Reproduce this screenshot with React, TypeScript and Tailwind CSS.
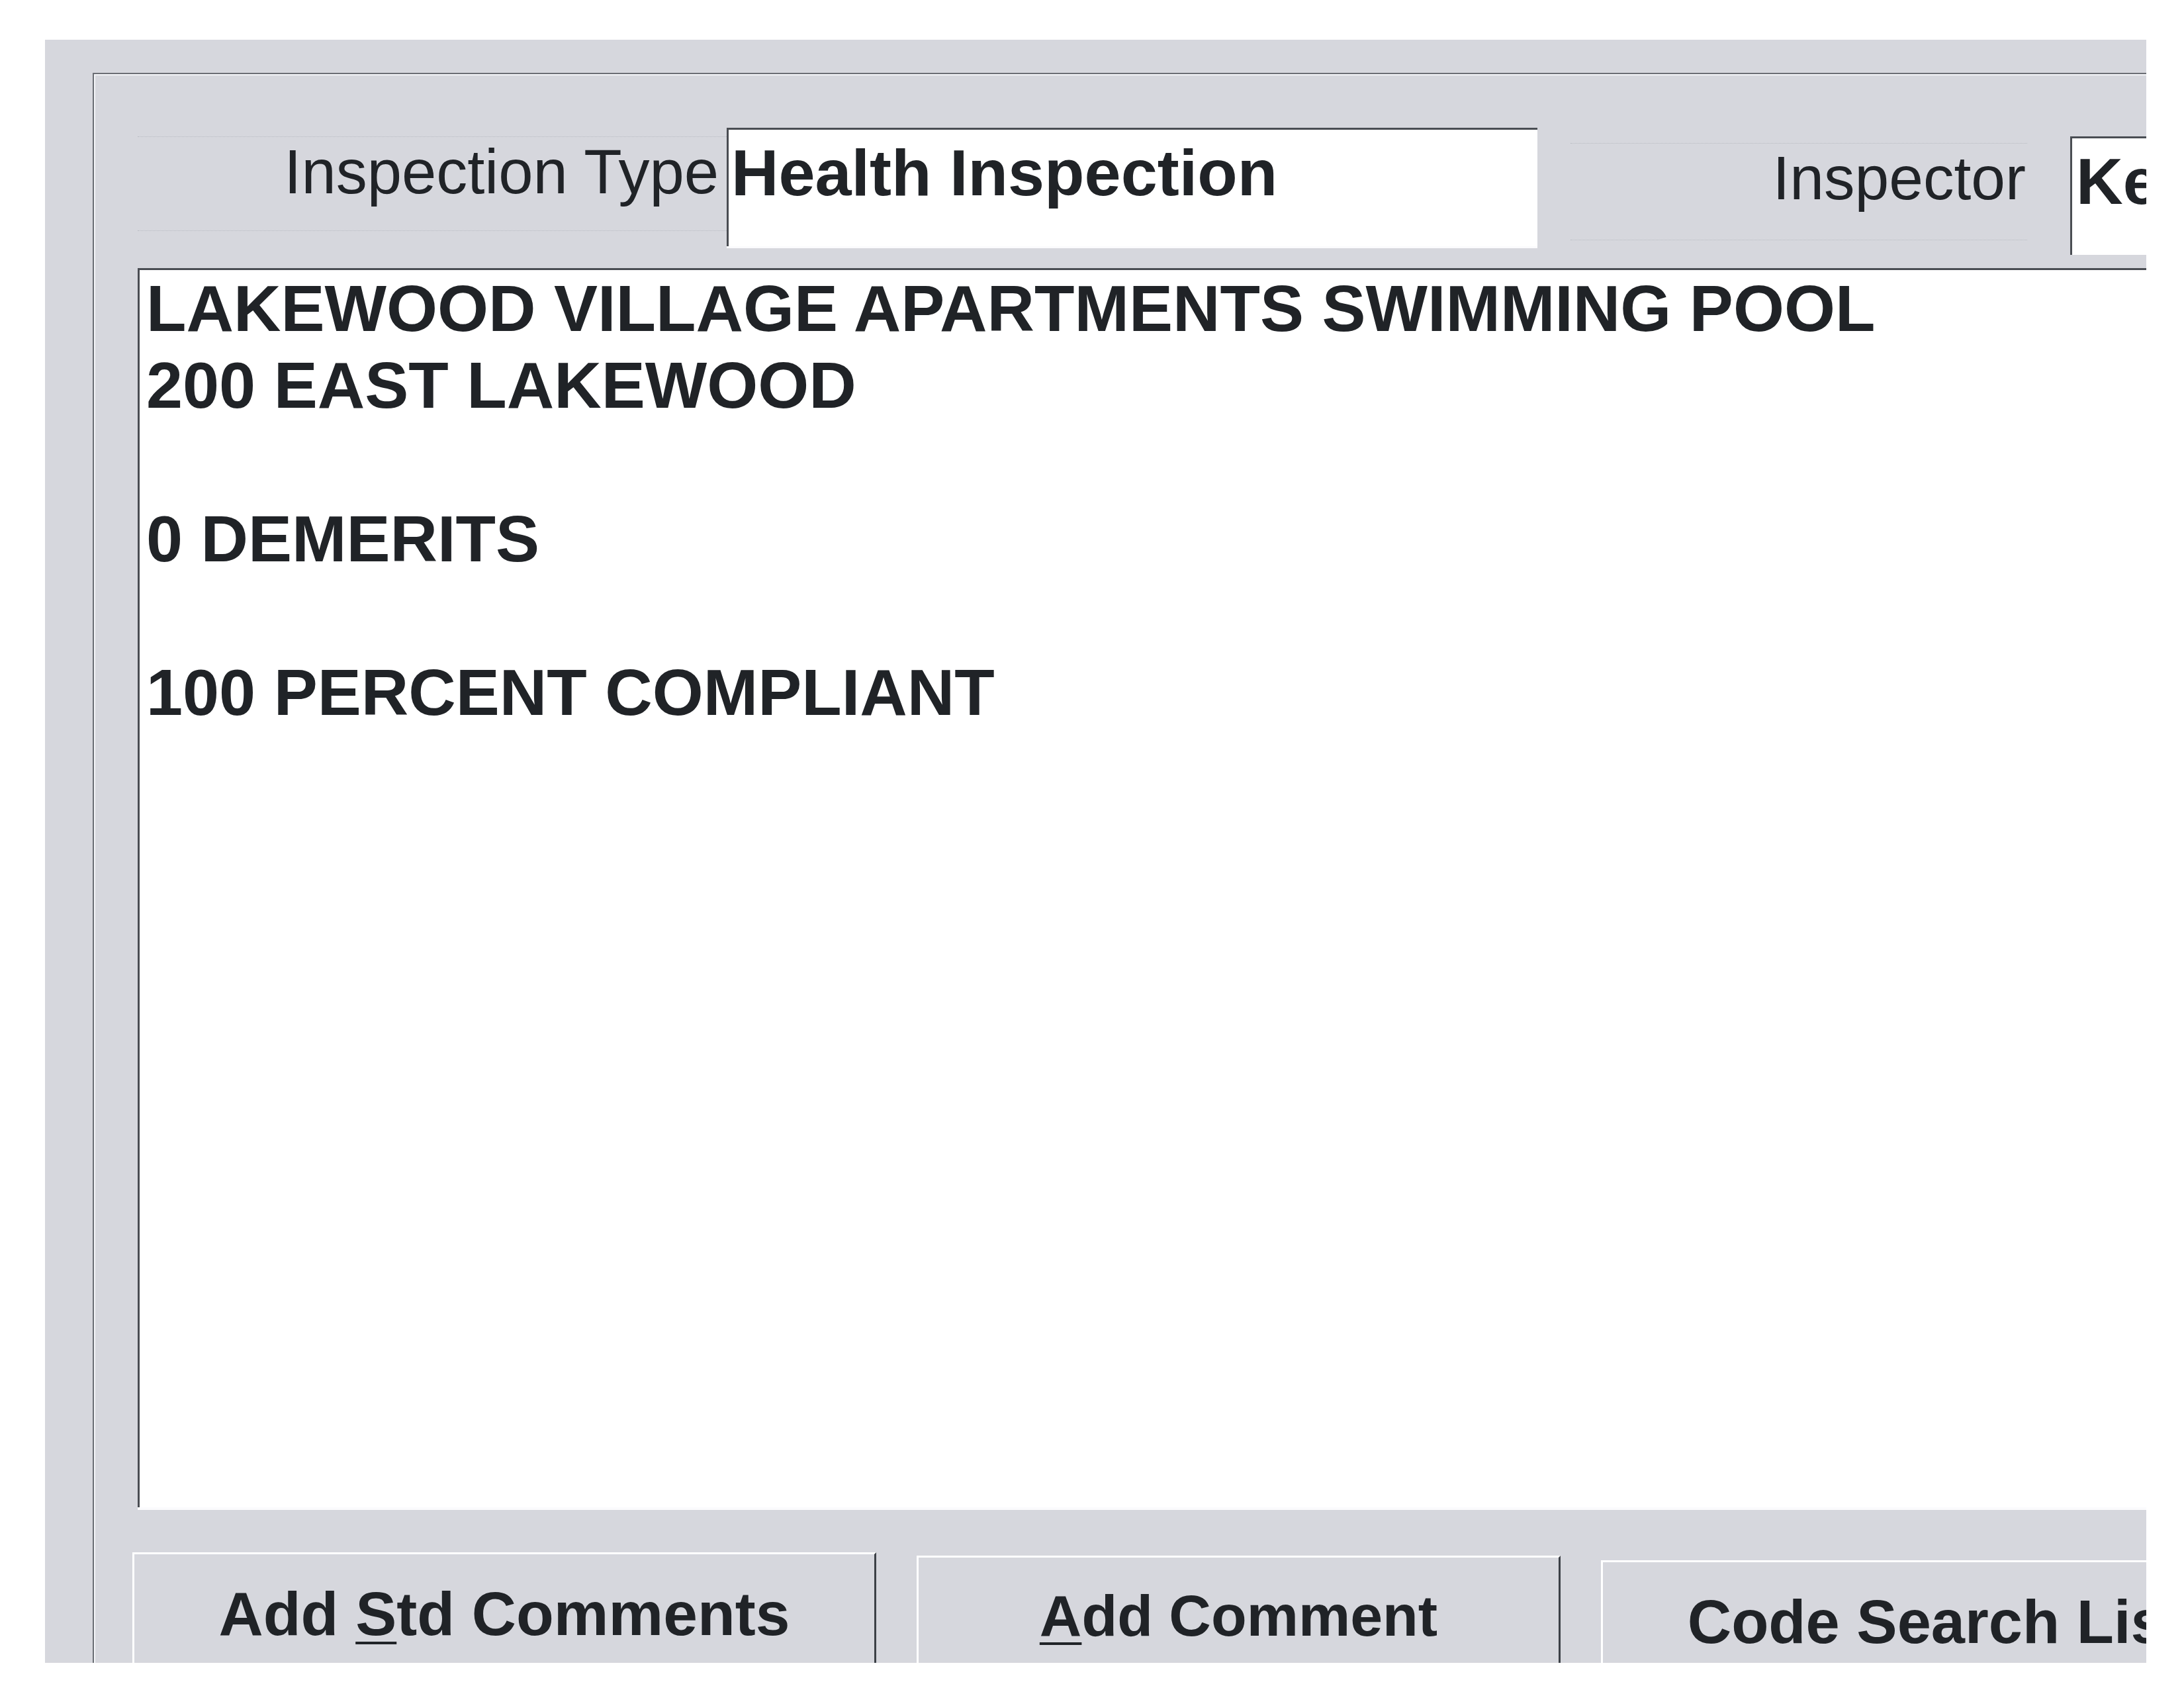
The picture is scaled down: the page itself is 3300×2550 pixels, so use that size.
import React from 'react';

const LINES = [
  'LAKEWOOD VILLAGE APARTMENTS SWIMMING POOL',
  '200 EAST LAKEWOOD',
  '',
  '0 DEMERITS',
  '',
  '100 PERCENT COMPLIANT',
];

export default function App() {
  return (
    <div
      className="w-[3300px] h-[2550px] bg-white pt-[60px] pl-[68px] text-[#202327]"
      style={{ fontFamily: '"Liberation Sans", Arial, sans-serif' }}
    >
      {/* Window surface, cropped at right and bottom */}
      <div className="w-[3175px] h-[2452px] bg-[#d6d7dd] overflow-hidden pl-[72px] pt-[50px]">
        {/* Etched frame */}
        <div className="w-[3200px] h-[2500px] border-l-2 border-t-2 border-[#6b6e74] shadow-[inset_2px_2px_0_#f4f5f8] pl-[66px]">
          {/* Header row */}
          <div className="flex items-start h-[293px]">
            <div className="shrink-0 mt-[94px] w-[890px] h-[143px] border-y border-dotted border-[#b9bbc2] flex justify-end pt-[6px] pr-[12px]">
              <span className="text-[94px] leading-none">Inspection Type</span>
            </div>
            <div className="shrink-0 mt-[81px] w-[1225px] h-[179px] bg-white border-t-[3px] border-l-[3px] border-[#4a4d53] shadow-[0_3px_0_#fbfbfd] pt-[15px] pl-[4px]">
              <span className="text-[99px] font-bold leading-none">Health Inspection</span>
            </div>
            <div className="shrink-0 ml-[50px] mt-[104px] w-[690px] h-[147px] border-y border-dotted border-[#b9bbc2] flex justify-end pt-[6px] pr-[2px]">
              <span className="text-[93px] leading-none">Inspector</span>
            </div>
            <div className="shrink-0 ml-[65px] mt-[94px] w-[400px] h-[179px] bg-white border-t-[3px] border-l-[3px] border-[#4a4d53] pt-[16px] pl-[6px]">
              <span className="text-[98px] font-bold leading-none">Ke</span>
            </div>
          </div>

          {/* Comment text area */}
          <div className="w-[3100px] h-[1872px] bg-white border-t-[3px] border-l-[3px] border-[#4a4d53] shadow-[0_4px_0_#fbfbfd] pl-[10px]">
            {LINES.map((line, i) => (
              <div key={i} className="h-[116px] text-[99px] font-bold leading-[116px] whitespace-pre">
                {line}
              </div>
            ))}
          </div>

          {/* Buttons */}
          <div className="flex items-start gap-[61px] mt-[68px] -ml-[8px]">
            <button className="shrink-0 w-[1124px] h-[220px] border-t-[3px] border-l-[3px] border-white border-r-[3px] border-r-[#3c4046] flex justify-center pt-[44px] cursor-pointer">
              <span className="text-[93px] font-bold leading-none whitespace-nowrap">
                Add <u className="underline decoration-[4px] underline-offset-[10px]">S</u>td Comments
              </span>
            </button>
            <button className="shrink-0 mt-[5px] w-[973px] h-[220px] border-t-[3px] border-l-[3px] border-white border-r-[3px] border-r-[#3c4046] flex justify-center pt-[44px] cursor-pointer">
              <span className="text-[88px] font-bold leading-none whitespace-nowrap">
                <u className="underline decoration-[4px] underline-offset-[10px]">A</u>dd Comment
              </span>
            </button>
            <button className="shrink-0 mt-[12px] w-[1013px] h-[220px] border-t-[3px] border-l-[3px] border-white border-r-[3px] border-r-[#3c4046] flex justify-center pt-[44px] cursor-pointer">
              <span className="text-[92px] font-bold leading-none whitespace-nowrap">Code Search List</span>
            </button>
          </div>
        </div>
      </div>
    </div>
  );
}
